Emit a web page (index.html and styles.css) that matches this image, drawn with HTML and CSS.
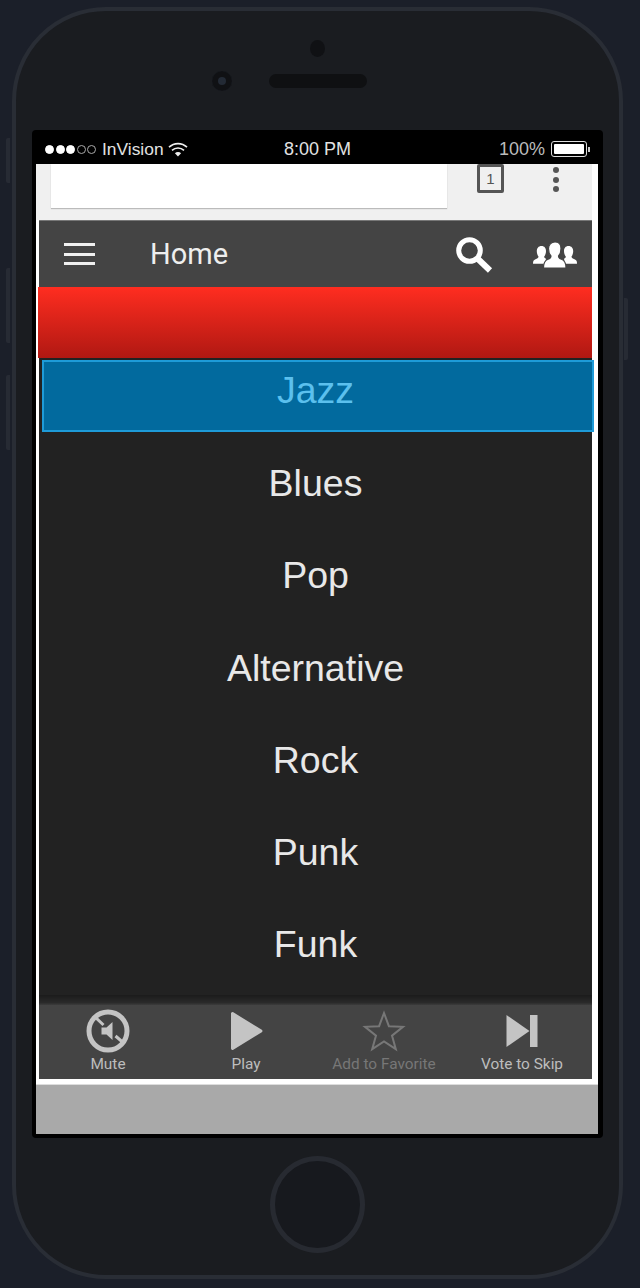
FILE: index.html
```html
<!DOCTYPE html>
<html lang="en">
<head>
    <meta charset="UTF-8">
    <title>Home</title>
    <link rel="stylesheet" href="styles.css">
</head>
<body>
    <div class="phone">
        <div class="side-btn side-btn-1"></div>
        <div class="side-btn side-btn-2"></div>
        <div class="side-btn side-btn-3"></div>
        <div class="side-btn side-btn-power"></div>

        <div class="phone-top">
            <div class="camera"></div>
            <div class="sensor-row">
                <div class="sensor"></div>
                <div class="speaker"></div>
            </div>
        </div>

        <div class="screen">
            <div class="status-bar">
                <div class="status-left">
                    <span class="signal"><i></i><i></i><i></i><i class="off"></i><i class="off"></i></span>
                    <span class="carrier">InVision</span>
                    <svg class="wifi" width="20" height="15" viewBox="0 0 20 15">
                        <path d="M1 5.2a13 13 0 0 1 18 0" fill="none" stroke="#eee" stroke-width="1.6"/>
                        <path d="M4 8.4a8.6 8.6 0 0 1 12 0" fill="none" stroke="#eee" stroke-width="1.6"/>
                        <path d="M6.9 11.2a4.4 4.4 0 0 1 6.2 0L10 14.4z" fill="#eee"/>
                    </svg>
                </div>
                <div class="status-time">8:00 PM</div>
                <div class="status-right">
                    <span>100%</span>
                    <span class="battery"><span class="battery-fill"></span></span>
                    <span class="battery-tip"></span>
                </div>
            </div>

            <div class="page">
                <div class="browser-bar">
                    <div class="url-card"></div>
                    <div class="tab-count">1</div>
                    <div class="menu-dots"><i></i><i></i><i></i></div>
                </div>

                <div class="toolbar">
                    <div class="hamburger"><i></i><i></i><i></i></div>
                    <div class="toolbar-title">Home</div>
                    <svg class="search-icon" width="38" height="38" viewBox="0 0 38 38">
                        <circle cx="13.5" cy="13.5" r="10.8" fill="none" stroke="#fff" stroke-width="5"/>
                        <path d="M22 22l12 11.500" stroke="#fff" stroke-width="6" fill="none"/>
                    </svg>
                    <svg class="people-icon" width="44" height="28" viewBox="0 0 44 28">
                        <path d="M8.5 5c3 0 4.500 2.300 4.500 5 0 2.500-.8 4.300-1.800 5.500 0 1.200.4 1.600 1.800 2.200l-1 5H0c0-2.500.5-3.700 2.500-4.500 1.500-.6 3-1 3-2.700-1-1.200-1.700-3.200-1.700-5.500C3.800 7.300 5.500 5 8.500 5z" fill="#fff"/>
                        <path d="M35.5 5c-3 0-4.500 2.300-4.500 5 0 2.500.8 4.300 1.800 5.500 0 1.200-.4 1.600-1.800 2.200l1 5H44c0-2.500-.5-3.700-2.500-4.500-1.500-.6-3-1-3-2.700 1-1.200 1.700-3.200 1.700-5.500C40.200 7.300 38.500 5 35.500 5z" fill="#fff"/>
                        <path d="M22 1c3.800 0 6 2.800 6 6.500 0 3.200-1 6-2.500 7.500 0 2 1 2.600 3 3.300 3.200 1.100 4.500 3 4.500 8.700H10.500c0-5.700 1.300-7.600 4.500-8.700 2-.7 3-1.300 3-3.300-1.500-1.500-2.500-4.300-2.500-7.500C15.500 3.800 18.200 1 22 1z" fill="#fff" stroke="#444" stroke-width="1.2"/>
                    </svg>
                </div>

                <div class="red-band"></div>

                <div class="genre-list">
                    <div class="genre selected">Jazz</div>
                    <div class="genre">Blues</div>
                    <div class="genre">Pop</div>
                    <div class="genre">Alternative</div>
                    <div class="genre">Rock</div>
                    <div class="genre">Punk</div>
                    <div class="genre">Funk</div>
                </div>
                <div class="list-shadow"></div>

                <div class="player-bar">
                    <div class="player-btn">
                        <svg width="46" height="46" viewBox="0 0 46 46">
                            <circle cx="23" cy="23" r="19" fill="none" stroke="#c4c4c4" stroke-width="5"/>
                            <path d="M16.500 19.500h5l6-5.500v18l-6-5.500h-5z" fill="#c4c4c4"/>
                            <path d="M10 9l8.500 8M30.500 28l7 6" stroke="#c4c4c4" stroke-width="3"/>
                        </svg>
                        <span>Mute</span>
                    </div>
                    <div class="player-btn">
                        <svg width="46" height="46" viewBox="0 0 46 46">
                            <path d="M8 5.5a1.500 1.500 0 0 1 2.300-1.200l28.500 17.500a1.500 1.500 0 0 1 0 2.500L10.300 41.700A1.500 1.500 0 0 1 8 40.500z" fill="#c4c4c4"/>
                        </svg>
                        <span>Play</span>
                    </div>
                    <div class="player-btn disabled">
                        <svg width="46" height="46" viewBox="0 0 46 46">
                            <path d="M23 5l4.900 13.200L42 18.800 31 27.600l3.800 13.600L23 33.400l-11.800 7.800L15 27.600 4 18.800l14.100-.6z" fill="none" stroke="#777" stroke-width="2"/>
                        </svg>
                        <span>Add to Favorite</span>
                    </div>
                    <div class="player-btn">
                        <svg width="46" height="46" viewBox="0 0 46 46">
                            <path d="M7.500 7l23 16-23 16z" fill="#c4c4c4"/>
                            <path d="M31 7h7.500v32H31z" fill="#c4c4c4"/>
                        </svg>
                        <span>Vote to Skip</span>
                    </div>
                </div>

                <div class="page-footer"></div>
            </div>
        </div>

        <div class="phone-bottom">
            <div class="home-button"></div>
        </div>
    </div>
</body>
</html>
```

FILE: styles.css
```css
html, body {
    margin: 0;
    height: 1288px;
    overflow: hidden;
}
body {
    background-color: #1b1f29;
    font-family: "Liberation Sans", Arial, sans-serif;
}
.phone {
    position: relative;
    box-sizing: border-box;
    width: 611px;
    height: 1272px;
    margin: 7px 0 0 12px;
    border: 4px solid #292d35;
    border-radius: 94px;
    background-color: #1a1c20;
    display: flex;
    flex-direction: column;
    align-items: center;
}
.side-btn {
    position: absolute;
    left: -10px;
    width: 4px;
    background-color: #272b34;
    border-radius: 2px 0 0 2px;
}
.side-btn-1 { top: 127px; height: 45px; }
.side-btn-2 { top: 257px; height: 75px; }
.side-btn-3 { top: 364px; height: 75px; }
.side-btn-power {
    left: auto;
    right: -9px;
    top: 287px;
    height: 62px;
    border-radius: 0 2px 2px 0;
}
.phone-top {
    height: 119px;
    width: 100%;
    flex-shrink: 0;
}
.camera {
    width: 15px;
    height: 17px;
    margin: 29px auto 0;
    border-radius: 50%;
    background-color: #101114;
}
.sensor-row {
    display: grid;
    grid-template-columns: 1fr auto 1fr;
    align-items: center;
    margin-top: 14px;
}
.sensor {
    justify-self: end;
    width: 20px;
    height: 20px;
    margin-right: 37px;
    border-radius: 50%;
    background-color: #0f1013;
    box-shadow: inset 0 0 0 6px #101114, inset 0 0 0 10px #232a35;
}
.speaker {
    width: 98px;
    height: 14px;
    border-radius: 7px;
    background-color: #0f1012;
}
.screen {
    box-sizing: border-box;
    width: 571px;
    height: 1008px;
    flex-shrink: 0;
    background-color: #000;
    border-radius: 4px;
    padding: 0 5px 4px 4px;
    display: flex;
    flex-direction: column;
}
.status-bar {
    height: 34px;
    flex-shrink: 0;
    display: grid;
    grid-template-columns: 1fr auto 1fr;
    align-items: center;
    color: #e2e2e2;
    font-size: 18px;
    padding: 4px 8px 0 9px;
    box-sizing: border-box;
}
.status-left {
    display: flex;
    align-items: center;
}
.signal {
    display: flex;
    gap: 1.5px;
    margin-right: 6px;
}
.signal i {
    box-sizing: border-box;
    width: 9px;
    height: 9px;
    border-radius: 50%;
    background-color: #fff;
    border: 1px solid #fff;
}
.signal i.off {
    background-color: transparent;
    border-color: #aaa;
}
.carrier {
    font-size: 17.4px;
}
.wifi {
    margin-left: 4px;
}
.status-right {
    display: flex;
    align-items: center;
    justify-content: flex-end;
    color: #bbb;
}
.battery {
    box-sizing: border-box;
    width: 36px;
    height: 16px;
    margin-left: 6px;
    padding: 2px;
    border: 1px solid #ddd;
    border-radius: 3px;
    display: flex;
}
.battery-fill {
    flex: 1;
    background-color: #fff;
    border-radius: 1px;
}
.battery-tip {
    width: 2px;
    height: 5px;
    margin-left: 1px;
    background-color: #ccc;
}
.page {
    flex: 1;
    min-height: 0;
    background-color: #fff;
    display: flex;
    flex-direction: column;
}
.browser-bar {
    height: 56px;
    flex-shrink: 0;
    margin-right: 6px;
    background-color: #f0f0f0;
    display: flex;
    align-items: flex-start;
}
.url-card {
    width: 396px;
    height: 44px;
    margin-left: 15px;
    background-color: #fff;
    box-shadow: 0 1px 1px #bbb;
}
.tab-count {
    box-sizing: border-box;
    width: 27px;
    height: 29px;
    margin-left: 30px;
    border: 3px solid #555;
    border-radius: 2px;
    color: #555;
    font-size: 15px;
    text-align: center;
    line-height: 23px;
}
.menu-dots {
    margin: 3px 0 0 49px;
    display: flex;
    flex-direction: column;
    gap: 3.5px;
}
.menu-dots i {
    width: 6px;
    height: 6px;
    border-radius: 50%;
    background-color: #555;
}
.toolbar {
    height: 67px;
    flex-shrink: 0;
    box-sizing: border-box;
    margin: 0 6px 0 3px;
    background-color: #444;
    border-top: 1px solid #777;
    display: flex;
    align-items: center;
    padding-left: 25px;
}
.hamburger {
    width: 31px;
    display: flex;
    flex-direction: column;
    gap: 6.5px;
}
.hamburger i {
    height: 3px;
    background-color: #f0f0f0;
}
.toolbar-title {
    margin-left: 55px;
    color: #eee;
    font-family: Roboto, sans-serif;
    font-size: 29px;
}
.search-icon {
    margin-left: auto;
    margin-top: 3px;
}
.people-icon {
    margin: 2px 15px 0 39px;
}
.red-band {
    height: 71px;
    flex-shrink: 0;
    margin: 0 6px 0 2px;
    background: linear-gradient(#ff2d20, #b01812);
}
.genre-list {
    height: 637px;
    flex-shrink: 0;
    box-sizing: border-box;
    margin: 0 6px 0 3px;
    padding-top: 2px;
    background-color: #222;
}
.genre {
    height: 92.3px;
    color: #e8e8e8;
    font-size: 37.5px;
    line-height: 92.3px;
    text-align: center;
}
.genre.selected {
    box-sizing: border-box;
    height: 72px;
    margin: 0 -2px 5px 3px;
    padding-right: 5px;
    background-color: #026a9e;
    border: 2px solid #1e9bd8;
    color: #5bc0ee;
    line-height: 56px;
}
.list-shadow {
    height: 10px;
    flex-shrink: 0;
    margin: 0 6px 0 3px;
    background: linear-gradient(#1b1b1b, #2a2a2a 75%, #3c3c3c);
}
.player-bar {
    height: 74px;
    flex-shrink: 0;
    margin: 0 6px 0 3px;
    background-color: #444;
    display: grid;
    grid-template-columns: repeat(4, 138px);
}
.player-btn {
    display: flex;
    flex-direction: column;
    align-items: center;
    color: #bdbdbd;
    font-family: Roboto, sans-serif;
    font-size: 15.4px;
    line-height: 19px;
    padding-top: 3px;
}
.player-btn svg {
    margin-bottom: 1px;
}
.player-btn.disabled {
    color: #777;
}
.page-footer {
    flex: 1;
    margin-top: 5px;
    border-top: 1px solid #ddd;
    background-color: #a9a9a9;
}
.phone-bottom {
    flex: 1;
    width: 100%;
}
.home-button {
    box-sizing: border-box;
    width: 95px;
    height: 97px;
    margin: 18px auto 0;
    border: 5px solid #272a31;
    border-radius: 50%;
    background-color: #17191e;
}
```
